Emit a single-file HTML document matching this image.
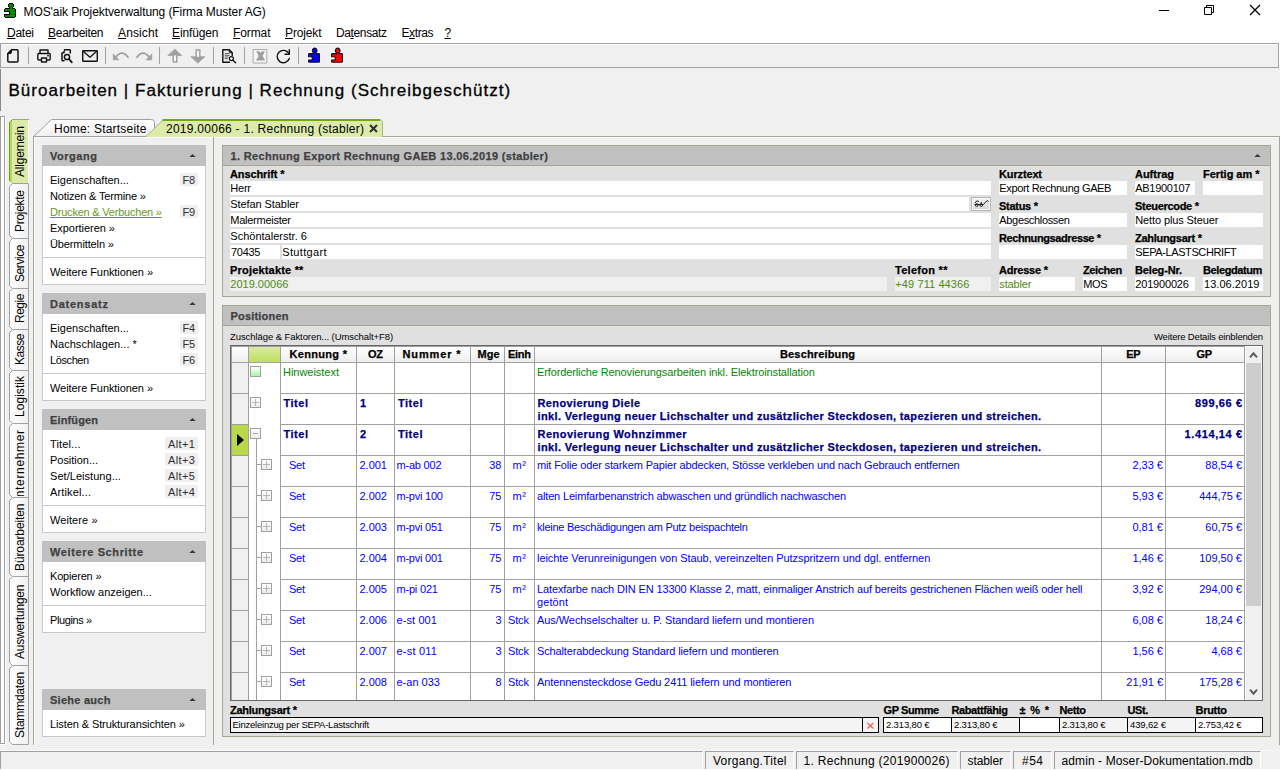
<!DOCTYPE html>
<html lang="de"><head><meta charset="utf-8"><title>MOS'aik Projektverwaltung</title>
<style>
html,body{margin:0;padding:0;}
body{width:1280px;height:770px;position:relative;overflow:hidden;background:#f0f0f0;font-family:"Liberation Sans",sans-serif;font-size:11px;color:#000;}
.a{position:absolute;}
.t{position:absolute;white-space:nowrap;line-height:1;}
.b{font-weight:bold;-webkit-text-stroke:0.25px;}
.box{position:absolute;box-sizing:border-box;}
.fld{position:absolute;background:#fff;height:14px;}
.sk{position:absolute;background:#efefef;height:12px;}
.vt{position:absolute;white-space:nowrap;transform-origin:0 0;transform:rotate(-90deg);font-size:13px;line-height:1;}
.u{text-decoration:underline;}
</style></head>
<body>
<div class="a" style="left:0px;top:0px;width:1280px;height:43px;background:#fff;"></div>
<svg class="a" style="left:0;top:0" width="20" height="20" viewBox="0 0 20 20" shape-rendering="crispEdges"><rect x="9" y="3" width="4" height="1" fill="#000"/><rect x="8" y="4" width="1" height="1" fill="#000"/><rect x="9" y="4" width="4" height="1" fill="#008a00"/><rect x="13" y="4" width="1" height="1" fill="#000"/><rect x="8" y="5" width="1" height="1" fill="#000"/><rect x="9" y="5" width="4" height="1" fill="#008a00"/><rect x="13" y="5" width="1" height="1" fill="#000"/><rect x="8" y="6" width="1" height="1" fill="#000"/><rect x="9" y="6" width="4" height="1" fill="#008a00"/><rect x="13" y="6" width="1" height="1" fill="#000"/><rect x="9" y="7" width="1" height="1" fill="#000"/><rect x="10" y="7" width="2" height="1" fill="#008a00"/><rect x="12" y="7" width="1" height="1" fill="#000"/><rect x="5" y="8" width="5" height="1" fill="#000"/><rect x="10" y="8" width="2" height="1" fill="#008a00"/><rect x="12" y="8" width="3" height="1" fill="#000"/><rect x="4" y="9" width="1" height="1" fill="#000"/><rect x="5" y="9" width="10" height="1" fill="#008a00"/><rect x="15" y="9" width="1" height="1" fill="#000"/><rect x="4" y="10" width="1" height="1" fill="#000"/><rect x="5" y="10" width="10" height="1" fill="#008a00"/><rect x="15" y="10" width="1" height="1" fill="#000"/><rect x="4" y="11" width="6" height="1" fill="#000"/><rect x="10" y="11" width="5" height="1" fill="#008a00"/><rect x="15" y="11" width="1" height="1" fill="#000"/><rect x="9" y="12" width="1" height="1" fill="#000"/><rect x="10" y="12" width="5" height="1" fill="#008a00"/><rect x="15" y="12" width="1" height="1" fill="#000"/><rect x="9" y="13" width="1" height="1" fill="#000"/><rect x="10" y="13" width="5" height="1" fill="#008a00"/><rect x="15" y="13" width="1" height="1" fill="#000"/><rect x="4" y="14" width="6" height="1" fill="#000"/><rect x="10" y="14" width="5" height="1" fill="#008a00"/><rect x="15" y="14" width="1" height="1" fill="#000"/><rect x="4" y="15" width="1" height="1" fill="#000"/><rect x="5" y="15" width="10" height="1" fill="#008a00"/><rect x="15" y="15" width="1" height="1" fill="#000"/><rect x="4" y="16" width="1" height="1" fill="#000"/><rect x="5" y="16" width="10" height="1" fill="#008a00"/><rect x="15" y="16" width="1" height="1" fill="#000"/><rect x="5" y="17" width="10" height="1" fill="#000"/></svg>
<div class="t" style="left:23.5px;top:6px;font-size:12px;letter-spacing:-0.08px;">MOS'aik Projektverwaltung (Firma Muster AG)</div>
<svg class="a" style="left:1150px;top:0" width="130" height="22" viewBox="0 0 130 22" fill="none" stroke="#000" stroke-width="1"><path d="M9 10.5h10"/><path d="M54.5 7.5h7v7h-7zM56.5 7.5v-2h7v7h-2"/><path d="M100 5l10 10M110 5l-10 10" stroke-width="1.25"/></svg>
<div class="t" style="left:7px;top:27px;font-size:12px;letter-spacing:-0.25px;"><span class="u">D</span>atei</div>
<div class="t" style="left:48px;top:27px;font-size:12px;letter-spacing:-0.28px;"><span class="u">B</span>earbeiten</div>
<div class="t" style="left:118px;top:27px;font-size:12px;letter-spacing:0.11px;"><span class="u">A</span>nsicht</div>
<div class="t" style="left:172px;top:27px;font-size:12px;letter-spacing:-0.12px;"><span class="u">E</span>infügen</div>
<div class="t" style="left:233px;top:27px;font-size:12px;letter-spacing:-0.1px;"><span class="u">F</span>ormat</div>
<div class="t" style="left:285px;top:27px;font-size:12px;letter-spacing:-0.14px;"><span class="u">P</span>rojekt</div>
<div class="t" style="left:336px;top:27px;font-size:12px;letter-spacing:-0.38px;">Da<span class="u">t</span>ensatz</div>
<div class="t" style="left:401.5px;top:27px;font-size:12px;letter-spacing:-0.4px;">E<span class="u">x</span>tras</div>
<div class="t" style="left:444.5px;top:27px;font-size:12px;letter-spacing:-0.4px;"><span class="u">?</span></div>
<div class="a" style="left:0px;top:43px;width:1280px;height:1px;background:#a0a0a0;"></div>
<div class="a" style="left:0px;top:67px;width:1280px;height:1px;background:#a0a0a0;"></div>
<div class="a" style="left:0px;top:44px;width:1px;height:23px;background:#a0a0a0;"></div>
<div class="a" style="left:1px;top:44px;width:1277px;height:1px;background:#fff;"></div>
<div class="a" style="left:1278px;top:43px;width:1px;height:25px;background:#a0a0a0;"></div>
<div class="a" style="left:1279px;top:43px;width:1px;height:25px;background:#fff;"></div>
<div class="a" style="left:28px;top:47px;width:1px;height:17px;background:#a0a0a0;"></div>
<div class="a" style="left:105px;top:47px;width:1px;height:17px;background:#a0a0a0;"></div>
<div class="a" style="left:159px;top:47px;width:1px;height:17px;background:#a0a0a0;"></div>
<div class="a" style="left:213px;top:47px;width:1px;height:17px;background:#a0a0a0;"></div>
<div class="a" style="left:244px;top:47px;width:1px;height:17px;background:#a0a0a0;"></div>
<div class="a" style="left:298px;top:47px;width:1px;height:17px;background:#a0a0a0;"></div>
<svg class="a" style="left:0;top:44px" width="360" height="23" viewBox="0 44 360 23" fill="none" stroke-linejoin="round" stroke-linecap="round"><path d="M11.5 49.8H17Q18 49.8 18 50.8V61Q18 62 17 62H8.8Q7.8 62 7.8 61V53.5z" stroke="#111" stroke-width="1.5"/><path d="M7.8 53.5L11.5 49.8V52.5Q11.5 53.5 10.5 53.5z" fill="#111" stroke="#111" stroke-width="1"/><path d="M40 53V50H48V53" stroke="#111" stroke-width="1.4"/><path d="M40.5 60H38.8Q37.8 60 37.8 59V54.5Q37.8 53.5 38.8 53.5H49.2Q50.2 53.5 50.2 54.5V59Q50.2 60 49.2 60H47.5" stroke="#111" stroke-width="1.4"/><path d="M41.5 58H46.5V62H41.5z" stroke="#111" stroke-width="1.4"/><circle cx="48" cy="55.7" r="0.9" fill="#111" stroke="none"/><path d="M64.5 49.8H69.5Q70.3 49.8 70.3 50.6V53M62 53V60Q62 60.8 62.8 60.8H64" stroke="#111" stroke-width="1.5"/><path d="M61.6 53.4L64.8 49.6V52.4Q64.8 53.4 63.8 53.4z" fill="#111" stroke="none"/><circle cx="67" cy="57" r="2.6" stroke="#111" stroke-width="1.5"/><path d="M69 59L71.8 62.3" stroke="#111" stroke-width="1.8"/><rect x="82.7" y="50.7" width="14.6" height="10.6" rx="0.8" stroke="#111" stroke-width="1.4"/><path d="M83 51L90 57.3L97 51" stroke="#111" stroke-width="1.3"/><path d="M115.5 57.5Q122 49 128 57.3" stroke="#a0a0a0" stroke-width="1.8"/><path d="M113.3 54.3V59.8H118.5z" fill="#a0a0a0" stroke="#a0a0a0" stroke-width="0.8"/><path d="M137 57.3Q143 49 149.5 57.5" stroke="#a0a0a0" stroke-width="1.8"/><path d="M151.7 54.3V59.8H146.5z" fill="#a0a0a0" stroke="#a0a0a0" stroke-width="0.8"/><path d="M175 49.3L181.8 55.5H168.2z" fill="#a0a0a0" stroke="#a0a0a0" stroke-width="0.8"/><path d="M173.2 55.5V62H176.8V55.5" stroke="#a0a0a0" stroke-width="1.5" fill="#fafafa" stroke-linejoin="miter"/><path d="M198 63L204.8 56.8H191.2z" fill="#a0a0a0" stroke="#a0a0a0" stroke-width="0.8"/><path d="M196.2 56.8V50H199.8V56.8" stroke="#a0a0a0" stroke-width="1.5" fill="#fafafa" stroke-linejoin="miter"/><path d="M222.8 49.8H229.3L232.2 52.7V55.8M222.8 49.8V62.2H229.5" stroke="#111" stroke-width="1.4"/><path d="M229.3 49.8V52.7H232.2" stroke="#111" stroke-width="1"/><path d="M224.7 53.6H229M224.7 55.3H229.5M224.7 57H228.5M224.7 58.7H227.8" stroke="#333" stroke-width="0.8" stroke-linecap="butt"/><circle cx="231.4" cy="58.6" r="2" stroke="#111" stroke-width="1.2" fill="#f4f4f4"/><path d="M232.9 60.2L235.6 62.8" stroke="#111" stroke-width="1.4"/><rect x="253.5" y="49.5" width="13.3" height="13.5" stroke="#a8a8a8" stroke-width="1" fill="#f6f6f6"/><path d="M256.2 51.2H259.3L260.6 52.8L261.9 51.2H265L262.6 55.9L265.2 60.6H256L258.6 55.9z" fill="#a0a0a0" stroke="none"/><path d="M288.8 53.5A6.2 6.2 0 1 0 289.3 58.5" stroke="#111" stroke-width="1.4"/><path d="M289.3 49.8V54.2H285" stroke="#111" stroke-width="1.4"/><path d="M309.3 53.6H313.6V52.7A2.4 2.4 0 1 1 315.8 52.7V53.6H318.7Q319.5 53.6 319.5 54.4V61.4Q319.5 62.2 318.7 62.2H309.3Q308.5 62.2 308.5 61.4V60H310.2A1.7 1.7 0 1 0 310.2 56.8H308.5V54.4Q308.5 53.6 309.3 53.6Z" fill="none" stroke="#fff" stroke-width="3" stroke-opacity="0.85"/><path d="M309.3 53.6H313.6V52.7A2.4 2.4 0 1 1 315.8 52.7V53.6H318.7Q319.5 53.6 319.5 54.4V61.4Q319.5 62.2 318.7 62.2H309.3Q308.5 62.2 308.5 61.4V60H310.2A1.7 1.7 0 1 0 310.2 56.8H308.5V54.4Q308.5 53.6 309.3 53.6Z" fill="#0000ff" stroke="#101018" stroke-width="1.1"/><path d="M332.3 53.6H336.6V52.7A2.4 2.4 0 1 1 338.8 52.7V53.6H341.7Q342.5 53.6 342.5 54.4V61.4Q342.5 62.2 341.7 62.2H332.3Q331.5 62.2 331.5 61.4V60H333.2A1.7 1.7 0 1 0 333.2 56.8H331.5V54.4Q331.5 53.6 332.3 53.6Z" fill="none" stroke="#fff" stroke-width="3" stroke-opacity="0.85"/><path d="M332.3 53.6H336.6V52.7A2.4 2.4 0 1 1 338.8 52.7V53.6H341.7Q342.5 53.6 342.5 54.4V61.4Q342.5 62.2 341.7 62.2H332.3Q331.5 62.2 331.5 61.4V60H333.2A1.7 1.7 0 1 0 333.2 56.8H331.5V54.4Q331.5 53.6 332.3 53.6Z" fill="#ff0000" stroke="#101018" stroke-width="1.1"/></svg>
<div class="t" style="left:8.5px;top:82px;font-size:17px;letter-spacing:1.02px;-webkit-text-stroke:0.3px #000;">Büroarbeiten | Fakturierung | Rechnung (Schreibgeschützt)</div>
<div class="a" style="left:0px;top:69px;width:1px;height:42px;background:#8a8a8a;"></div>
<div class="a" style="left:0px;top:116px;width:1px;height:628px;background:#a0a0a0;"></div>
<div class="a" style="left:1px;top:116px;width:3px;height:628px;background:#fff;"></div>
<div class="a" style="left:4px;top:116px;width:1px;height:628px;background:#a0a0a0;"></div>
<div class="a" style="left:0px;top:116px;width:5px;height:1px;background:#a0a0a0;"></div>
<div class="a" style="left:0px;top:743px;width:5px;height:1px;background:#a0a0a0;"></div>
<div class="a" style="left:0px;top:744px;width:6px;height:1px;background:#fff;"></div>
<div class="a" style="left:5px;top:116px;width:1px;height:628px;background:#fff;"></div>
<svg class="a" style="left:0;top:110px" width="32" height="640" viewBox="0 110 32 640"><defs><linearGradient id="vg" x1="0" y1="0" x2="1" y2="0"><stop offset="0" stop-color="#ffffff"/><stop offset="1" stop-color="#f0f0f0"/></linearGradient></defs><path d="M28 119.5H12L9 122.5V181L11.5 183.5H28z" fill="#dceba9"/><path d="M10 122L12 120V183H11.5L10 181z" fill="#b4d957"/><path d="M9.5 181V122.5L12.5 119.5" fill="none" stroke="#6aa505" stroke-width="1"/><path d="M12 119.5H29" fill="none" stroke="#a0a0a0" stroke-width="1"/><path d="M28.5 120V183" fill="none" stroke="#fff" stroke-width="1"/><path d="M28.5 183.5H12.5L9.5 186.5V235.5L12.5 238.5H28.5z" fill="url(#vg)" stroke="#a0a0a0" stroke-width="1"/><path d="M28.5 238.5H12.5L9.5 241.5V285.5L12.5 288.5H28.5z" fill="url(#vg)" stroke="#a0a0a0" stroke-width="1"/><path d="M28.5 288.5H12.5L9.5 291.5V326.5L12.5 329.5H28.5z" fill="url(#vg)" stroke="#a0a0a0" stroke-width="1"/><path d="M28.5 329.5H12.5L9.5 332.5V367.5L12.5 370.5H28.5z" fill="url(#vg)" stroke="#a0a0a0" stroke-width="1"/><path d="M28.5 370.5H12.5L9.5 373.5V420.5L12.5 423.5H28.5z" fill="url(#vg)" stroke="#a0a0a0" stroke-width="1"/><path d="M28.5 423.5H12.5L9.5 426.5V494.5L12.5 497.5H28.5z" fill="url(#vg)" stroke="#a0a0a0" stroke-width="1"/><path d="M28.5 497.5H12.5L9.5 500.5V573.5L12.5 576.5H28.5z" fill="url(#vg)" stroke="#a0a0a0" stroke-width="1"/><path d="M28.5 576.5H12.5L9.5 579.5V662.5L12.5 665.5H28.5z" fill="url(#vg)" stroke="#a0a0a0" stroke-width="1"/><path d="M28.5 665.5H12.5L9.5 668.5V741.5L12.5 744.5H28.5z" fill="url(#vg)" stroke="#a0a0a0" stroke-width="1"/></svg>
<div class="vt" style="left:14px;top:176.5px;font-size:12px;letter-spacing:-0.21px;">Allgemein</div>
<div class="vt" style="left:14px;top:232px;font-size:12px;letter-spacing:-0.29px;">Projekte</div>
<div class="vt" style="left:14px;top:281.5px;font-size:12px;letter-spacing:-0.42px;">Service</div>
<div class="vt" style="left:14px;top:323.43px;font-size:12px;letter-spacing:-0.5px;">Regie</div>
<div class="vt" style="left:14px;top:365.42px;font-size:12px;letter-spacing:-0.5px;">Kasse</div>
<div class="vt" style="left:14px;top:417px;font-size:12px;letter-spacing:0.04px;">Logistik</div>
<div class="a" style="left:10px;top:424px;width:18px;height:72px;overflow:hidden;"><div class="vt" style="left:4px;top:104.04px;font-size:12px;letter-spacing:0.67px;">Subunternehmer</div></div>
<div class="vt" style="left:14px;top:571px;font-size:12px;letter-spacing:-0.11px;">Büroarbeiten</div>
<div class="vt" style="left:14px;top:658.5px;font-size:12px;letter-spacing:-0.2px;">Auswertungen</div>
<div class="vt" style="left:14px;top:738px;font-size:12px;letter-spacing:-0.22px;">Stammdaten</div>
<div class="box" style="left:33px;top:136px;width:1247px;height:609px;border:1px solid #aaa592;border-bottom:none;"></div>
<div class="a" style="left:34px;top:137px;width:1245px;height:1px;background:#fff;"></div>
<div class="a" style="left:34px;top:137px;width:1px;height:608px;background:#fff;"></div>
<div class="a" style="left:213px;top:137px;width:1px;height:608px;background:#aaa592;"></div>
<svg class="a" style="left:30px;top:116px" width="360" height="22" viewBox="30 116 360 22">
<defs><linearGradient id="tg" x1="0" y1="0" x2="0" y2="1"><stop offset="0" stop-color="#ffffff"/><stop offset="1" stop-color="#f0f0f0"/></linearGradient></defs>
<path d="M33.5 136.5L51.5 119.5H151.5Q154.5 119.5 154.5 122.5V136.5z" fill="url(#tg)" stroke="#a0a0a0" stroke-width="1"/>
<path d="M145.5 137L163 120H379Q382 120 382 123V137z" fill="#dceba9"/>
<path d="M146 136.5L163.5 119.5H379.5Q382.5 119.5 382.5 122.5V137" fill="none" stroke="#a8b878" stroke-width="1"/>
<path d="M162.5 120H380" fill="none" stroke="#76a80a" stroke-width="2"/>
</svg>
<div class="t" style="left:54px;top:123px;font-size:12px;letter-spacing:0.21px;">Home: Startseite</div>
<div class="t" style="left:166px;top:123px;font-size:12px;letter-spacing:0.26px;">2019.00066 - 1. Rechnung (stabler)</div>
<svg class="a" style="left:369px;top:124px" width="9" height="9" viewBox="0 0 9 9"><path d="M1 1L8 8M8 1L1 8" stroke="#303030" stroke-width="2"/></svg>
<div class="a" style="left:0px;top:750px;width:1280px;height:1px;background:#f8f8f8;"></div>
<div class="a" style="left:0px;top:769px;width:1280px;height:1px;background:#fff;"></div>
<div class="box" style="left:0px;top:751px;width:703px;height:18px;border-left:1px solid #a0a0a0;border-top:1px solid #a0a0a0;border-right:1px solid #fff;"></div>
<div class="box" style="left:705px;top:751px;width:89px;height:18px;border-left:1px solid #a0a0a0;border-top:1px solid #a0a0a0;border-right:1px solid #fff;"></div>
<div class="t" style="left:713px;top:755px;font-size:12px;letter-spacing:0.27px;">Vorgang.Titel</div>
<div class="box" style="left:796px;top:751px;width:162px;height:18px;border-left:1px solid #a0a0a0;border-top:1px solid #a0a0a0;border-right:1px solid #fff;"></div>
<div class="t" style="left:803.5px;top:755px;font-size:12px;letter-spacing:0.3px;">1. Rechnung (201900026)</div>
<div class="box" style="left:960px;top:751px;width:51px;height:18px;border-left:1px solid #a0a0a0;border-top:1px solid #a0a0a0;border-right:1px solid #fff;"></div>
<div class="t" style="left:967.5px;top:755px;font-size:12px;letter-spacing:-0.09px;">stabler</div>
<div class="box" style="left:1013px;top:751px;width:39px;height:18px;border-left:1px solid #a0a0a0;border-top:1px solid #a0a0a0;border-right:1px solid #fff;"></div>
<div class="t" style="left:1022px;top:755px;font-size:12px;letter-spacing:0.49px;">#54</div>
<div class="box" style="left:1054px;top:751px;width:207px;height:18px;border-left:1px solid #a0a0a0;border-top:1px solid #a0a0a0;border-right:1px solid #fff;"></div>
<div class="t" style="left:1061.5px;top:755px;font-size:12px;letter-spacing:0.1px;">admin - Moser-Dokumentation.mdb</div>
<div class="box" style="left:42px;top:165px;width:164px;height:120px;background:#fff;border:1px solid #c8c8c8;border-top:none;"></div>
<div class="a" style="left:42px;top:145px;width:164px;height:21px;background:#c0c0c0;"></div>
<div class="t b" style="left:50px;top:151px;font-size:11px;letter-spacing:0.53px;color:#404040;">Vorgang</div>
<svg class="a" style="left:189px;top:154px" width="7" height="3" viewBox="0 0 7 3"><path d="M0.3 3L3.5 0L6.7 3z" fill="#383838"/></svg>
<div class="t" style="left:50px;top:175px;font-size:11px;">Eigenschaften...</div>
<div class="sk" style="left:180px;top:173px;width:18px;height:13px;"></div>
<div class="t" style="left:182.5px;top:175px;font-size:11px;letter-spacing:-0.34px;color:#303030;">F8</div>
<div class="t" style="left:50px;top:191px;font-size:11px;letter-spacing:-0.16px;">Notizen &amp; Termine »</div>
<div class="t u" style="left:50px;top:207px;font-size:11px;letter-spacing:-0.21px;color:#6a9a1a;">Drucken &amp; Verbuchen »</div>
<div class="sk" style="left:180px;top:205px;width:18px;height:13px;"></div>
<div class="t" style="left:182.5px;top:207px;font-size:11px;letter-spacing:-0.34px;color:#303030;">F9</div>
<div class="t" style="left:50px;top:223px;font-size:11px;letter-spacing:-0.04px;">Exportieren »</div>
<div class="t" style="left:50px;top:239px;font-size:11px;letter-spacing:-0.12px;">Übermitteln »</div>
<div class="a" style="left:43px;top:257px;width:162px;height:1px;background:#c8c8c8;"></div>
<div class="t" style="left:50px;top:267px;font-size:11px;letter-spacing:-0.07px;">Weitere Funktionen »</div>
<div class="box" style="left:42px;top:313px;width:164px;height:88px;background:#fff;border:1px solid #c8c8c8;border-top:none;"></div>
<div class="a" style="left:42px;top:293px;width:164px;height:21px;background:#c0c0c0;"></div>
<div class="t b" style="left:50px;top:299px;font-size:11px;letter-spacing:0.75px;color:#404040;">Datensatz</div>
<svg class="a" style="left:189px;top:302px" width="7" height="3" viewBox="0 0 7 3"><path d="M0.3 3L3.5 0L6.7 3z" fill="#383838"/></svg>
<div class="t" style="left:50px;top:323px;font-size:11px;">Eigenschaften...</div>
<div class="sk" style="left:180px;top:321px;width:18px;height:13px;"></div>
<div class="t" style="left:182.5px;top:323px;font-size:11px;letter-spacing:-0.34px;color:#303030;">F4</div>
<div class="t" style="left:50px;top:339px;font-size:11px;letter-spacing:0.04px;">Nachschlagen... *</div>
<div class="sk" style="left:180px;top:337px;width:18px;height:13px;"></div>
<div class="t" style="left:182.5px;top:339px;font-size:11px;letter-spacing:-0.34px;color:#303030;">F5</div>
<div class="t" style="left:50px;top:355px;font-size:11px;letter-spacing:-0.4px;">Löschen</div>
<div class="sk" style="left:180px;top:353px;width:18px;height:13px;"></div>
<div class="t" style="left:182.5px;top:355px;font-size:11px;letter-spacing:-0.34px;color:#303030;">F6</div>
<div class="a" style="left:43px;top:373px;width:162px;height:1px;background:#c8c8c8;"></div>
<div class="t" style="left:50px;top:383px;font-size:11px;letter-spacing:-0.07px;">Weitere Funktionen »</div>
<div class="box" style="left:42px;top:429px;width:164px;height:104px;background:#fff;border:1px solid #c8c8c8;border-top:none;"></div>
<div class="a" style="left:42px;top:409px;width:164px;height:21px;background:#c0c0c0;"></div>
<div class="t b" style="left:50px;top:415px;font-size:11px;letter-spacing:0.13px;color:#404040;">Einfügen</div>
<svg class="a" style="left:189px;top:418px" width="7" height="3" viewBox="0 0 7 3"><path d="M0.3 3L3.5 0L6.7 3z" fill="#383838"/></svg>
<div class="t" style="left:50px;top:439px;font-size:11px;letter-spacing:0.13px;">Titel...</div>
<div class="sk" style="left:165px;top:437px;width:33px;height:13px;"></div>
<div class="t" style="left:168px;top:439px;font-size:11px;letter-spacing:0.4px;color:#303030;">Alt+1</div>
<div class="t" style="left:50px;top:455px;font-size:11px;letter-spacing:-0.03px;">Position...</div>
<div class="sk" style="left:165px;top:453px;width:33px;height:13px;"></div>
<div class="t" style="left:168px;top:455px;font-size:11px;letter-spacing:0.4px;color:#303030;">Alt+3</div>
<div class="t" style="left:50px;top:471px;font-size:11px;letter-spacing:0.04px;">Set/Leistung...</div>
<div class="sk" style="left:165px;top:469px;width:33px;height:13px;"></div>
<div class="t" style="left:168px;top:471px;font-size:11px;letter-spacing:0.4px;color:#303030;">Alt+5</div>
<div class="t" style="left:50px;top:487px;font-size:11px;letter-spacing:0.14px;">Artikel...</div>
<div class="sk" style="left:165px;top:485px;width:33px;height:13px;"></div>
<div class="t" style="left:168px;top:487px;font-size:11px;letter-spacing:0.4px;color:#303030;">Alt+4</div>
<div class="a" style="left:43px;top:505px;width:162px;height:1px;background:#c8c8c8;"></div>
<div class="t" style="left:50px;top:515px;font-size:11px;letter-spacing:0.08px;">Weitere »</div>
<div class="box" style="left:42px;top:561px;width:164px;height:72px;background:#fff;border:1px solid #c8c8c8;border-top:none;"></div>
<div class="a" style="left:42px;top:541px;width:164px;height:21px;background:#c0c0c0;"></div>
<div class="t b" style="left:50px;top:547px;font-size:11px;letter-spacing:0.63px;color:#404040;">Weitere Schritte</div>
<svg class="a" style="left:189px;top:550px" width="7" height="3" viewBox="0 0 7 3"><path d="M0.3 3L3.5 0L6.7 3z" fill="#383838"/></svg>
<div class="t" style="left:50px;top:571px;font-size:11px;letter-spacing:-0.19px;">Kopieren »</div>
<div class="t" style="left:50px;top:587px;font-size:11px;">Workflow anzeigen...</div>
<div class="a" style="left:43px;top:605px;width:162px;height:1px;background:#c8c8c8;"></div>
<div class="t" style="left:50px;top:615px;font-size:11px;letter-spacing:-0.4px;">Plugins »</div>
<div class="box" style="left:42px;top:709px;width:164px;height:28px;background:#fff;border:1px solid #c8c8c8;border-top:none;"></div>
<div class="a" style="left:42px;top:689px;width:164px;height:21px;background:#c0c0c0;"></div>
<div class="t b" style="left:50px;top:695px;font-size:11px;letter-spacing:0.26px;color:#404040;">Siehe auch</div>
<svg class="a" style="left:189px;top:698px" width="7" height="3" viewBox="0 0 7 3"><path d="M0.3 3L3.5 0L6.7 3z" fill="#383838"/></svg>
<div class="t" style="left:50px;top:719px;font-size:11px;letter-spacing:-0.1px;">Listen &amp; Strukturansichten »</div>
<div class="box" style="left:222px;top:145px;width:1049px;height:152px;border:1px solid #aaa592;background:#e0e0e0;"></div>
<div class="a" style="left:223px;top:146px;width:1047px;height:19px;background:#c0c0c0;"></div>
<div class="a" style="left:223px;top:165px;width:1047px;height:1px;background:#aaa592;"></div>
<div class="t b" style="left:230.5px;top:151px;font-size:11px;letter-spacing:0.33px;color:#404040;">1. Rechnung Export Rechnung GAEB 13.06.2019 (stabler)</div>
<svg class="a" style="left:1254px;top:154px" width="7" height="3" viewBox="0 0 7 3"><path d="M0.3 3L3.5 0L6.7 3z" fill="#383838"/></svg>
<div class="t b" style="left:230px;top:169px;font-size:11px;letter-spacing:-0.11px;">Anschrift *</div>
<div class="fld" style="left:230px;top:181px;width:761px;background:#fff;"></div>
<div class="t" style="left:230.3px;top:183px;font-size:11px;letter-spacing:-0.23px;">Herr</div>
<div class="fld" style="left:230px;top:197px;width:739px;background:#fff;"></div>
<div class="t" style="left:230.3px;top:199px;font-size:11px;letter-spacing:-0.08px;">Stefan Stabler</div>
<div class="fld" style="left:230px;top:213px;width:761px;background:#fff;"></div>
<div class="t" style="left:230.3px;top:215px;font-size:11px;letter-spacing:-0.26px;">Malermeister</div>
<div class="fld" style="left:230px;top:229px;width:761px;background:#fff;"></div>
<div class="t" style="left:230.3px;top:231px;font-size:11px;letter-spacing:0.01px;">Schöntalerstr. 6</div>
<div class="fld" style="left:230px;top:245px;width:50px;background:#fff;"></div>
<div class="t" style="left:231px;top:247px;font-size:11px;letter-spacing:-0.28px;">70435</div>
<div class="fld" style="left:282px;top:245px;width:709px;background:#fff;"></div>
<div class="t" style="left:282.3px;top:247px;font-size:11px;letter-spacing:0.32px;">Stuttgart</div>
<div class="box" style="left:971px;top:197px;width:20px;height:14px;background:linear-gradient(#f4f4f4,#d6d6d6);border:1px solid #b4b4b4;box-shadow:inset 0 0 0 1px #fafafa;"></div>
<svg class="a" style="left:972px;top:198px" width="18" height="12" viewBox="972 198 18 12" fill="none" stroke="#222" stroke-width="1"><path d="M974.5 204.5h9M975 203Q976.5 199.5 979 201.5M980.5 203.5Q981 202 982 202.5M983.5 204.5L987 200.5L988.5 201.5"/><circle cx="976.7" cy="205" r="1.4"/><circle cx="981.3" cy="205" r="1.4"/></svg>
<div class="t b" style="left:230px;top:265px;font-size:11px;letter-spacing:0.19px;">Projektakte **</div>
<div class="fld" style="left:230px;top:277px;width:657px;background:#f0f0f0;"></div>
<div class="t" style="left:230.3px;top:279px;font-size:11px;color:#4f8a10;">2019.00066</div>
<div class="t b" style="left:895px;top:265px;font-size:11px;letter-spacing:0.28px;">Telefon **</div>
<div class="fld" style="left:895px;top:277px;width:96px;background:#f0f0f0;"></div>
<div class="t" style="left:895.3px;top:279px;font-size:11px;letter-spacing:0.1px;color:#4f8a10;">+49 711 44366</div>
<div class="t b" style="left:999px;top:169px;font-size:11px;letter-spacing:-0.14px;">Kurztext</div>
<div class="fld" style="left:999px;top:181px;width:128px;background:#fff;"></div>
<div class="t" style="left:999.3px;top:183px;font-size:11px;letter-spacing:-0.34px;">Export Rechnung GAEB</div>
<div class="t b" style="left:1135px;top:169px;font-size:11px;letter-spacing:-0.02px;">Auftrag</div>
<div class="fld" style="left:1135px;top:181px;width:60px;background:#fff;"></div>
<div class="t" style="left:1135.3px;top:183px;font-size:11px;letter-spacing:-0.3px;">AB1900107</div>
<div class="t b" style="left:1203px;top:169px;font-size:11px;letter-spacing:-0.04px;">Fertig am *</div>
<div class="fld" style="left:1203px;top:181px;width:60px;background:#fff;"></div>
<div class="t b" style="left:999px;top:201px;font-size:11px;letter-spacing:-0.28px;">Status *</div>
<div class="fld" style="left:999px;top:213px;width:128px;background:#fff;"></div>
<div class="t" style="left:999.3px;top:215px;font-size:11px;letter-spacing:-0.33px;">Abgeschlossen</div>
<div class="t b" style="left:1135px;top:201px;font-size:11px;letter-spacing:-0.3px;">Steuercode *</div>
<div class="fld" style="left:1135px;top:213px;width:128px;background:#fff;"></div>
<div class="t" style="left:1135.3px;top:215px;font-size:11px;letter-spacing:-0.12px;">Netto plus Steuer</div>
<div class="t b" style="left:999px;top:233px;font-size:11px;letter-spacing:-0.4px;">Rechnungsadresse *</div>
<div class="fld" style="left:999px;top:245px;width:128px;background:#fff;"></div>
<div class="t b" style="left:1135px;top:233px;font-size:11px;letter-spacing:-0.28px;">Zahlungsart *</div>
<div class="fld" style="left:1135px;top:245px;width:128px;background:#fff;"></div>
<div class="t" style="left:1135.3px;top:247px;font-size:11px;letter-spacing:-0.4px;">SEPA-LASTSCHRIFT</div>
<div class="t b" style="left:999px;top:265px;font-size:11px;letter-spacing:-0.22px;">Adresse *</div>
<div class="fld" style="left:999px;top:277px;width:76px;background:#fff;"></div>
<div class="t" style="left:999.3px;top:279px;font-size:11px;letter-spacing:-0.14px;color:#4f8a10;">stabler</div>
<div class="t b" style="left:1083px;top:265px;font-size:11px;letter-spacing:-0.4px;">Zeichen</div>
<div class="fld" style="left:1083px;top:277px;width:44px;background:#fff;"></div>
<div class="t" style="left:1083.3px;top:279px;font-size:11px;letter-spacing:-0.4px;">MOS</div>
<div class="t b" style="left:1135px;top:265px;font-size:11px;letter-spacing:-0.16px;">Beleg-Nr.</div>
<div class="fld" style="left:1135px;top:277px;width:60px;background:#fff;"></div>
<div class="t" style="left:1135.3px;top:279px;font-size:11px;letter-spacing:-0.18px;">201900026</div>
<div class="t b" style="left:1203px;top:265px;font-size:11px;letter-spacing:-0.4px;">Belegdatum</div>
<div class="fld" style="left:1203px;top:277px;width:60px;background:#fff;"></div>
<div class="t" style="left:1204px;top:279px;font-size:11px;letter-spacing:0.04px;">13.06.2019</div>
<div class="box" style="left:222px;top:305px;width:1049px;height:432px;border:1px solid #aaa592;background:#e0e0e0;"></div>
<div class="a" style="left:223px;top:306px;width:1047px;height:19px;background:#c0c0c0;"></div>
<div class="a" style="left:223px;top:325px;width:1047px;height:1px;background:#aaa592;"></div>
<div class="t b" style="left:230.5px;top:311px;font-size:11px;letter-spacing:0.19px;color:#404040;">Positionen</div>
<div class="t" style="left:230px;top:332px;font-size:9.5px;letter-spacing:-0.08px;">Zuschläge &amp; Faktoren... (Umschalt+F8)</div>
<div class="t" style="left:1154px;top:332px;font-size:9.5px;letter-spacing:-0.17px;">Weitere Details einblenden</div>
<div class="a" style="left:230px;top:345px;width:1033px;height:356px;background:#fff;"></div>
<div class="a" style="left:232px;top:347px;width:16px;height:353px;background:#f0f0f0;"></div>
<div class="a" style="left:232px;top:347px;width:1012px;height:15px;background:linear-gradient(#ffffff,#eeeeee);"></div>
<div class="a" style="left:249px;top:347px;width:31px;height:15px;background:linear-gradient(#dceba4,#bfe05c);"></div>
<div class="a" style="left:232px;top:362px;width:16px;height:1px;background:#a0a0a0;"></div>
<div class="a" style="left:280px;top:362px;width:965px;height:1px;background:#a0a0a0;"></div>
<div class="a" style="left:232px;top:393px;width:16px;height:1px;background:#a0a0a0;"></div>
<div class="a" style="left:280px;top:393px;width:965px;height:1px;background:#a0a0a0;"></div>
<div class="a" style="left:232px;top:424px;width:16px;height:1px;background:#a0a0a0;"></div>
<div class="a" style="left:280px;top:424px;width:965px;height:1px;background:#a0a0a0;"></div>
<div class="a" style="left:232px;top:455px;width:16px;height:1px;background:#a0a0a0;"></div>
<div class="a" style="left:280px;top:455px;width:965px;height:1px;background:#a0a0a0;"></div>
<div class="a" style="left:232px;top:486px;width:16px;height:1px;background:#a0a0a0;"></div>
<div class="a" style="left:280px;top:486px;width:965px;height:1px;background:#a0a0a0;"></div>
<div class="a" style="left:232px;top:517px;width:16px;height:1px;background:#a0a0a0;"></div>
<div class="a" style="left:280px;top:517px;width:965px;height:1px;background:#a0a0a0;"></div>
<div class="a" style="left:232px;top:548px;width:16px;height:1px;background:#a0a0a0;"></div>
<div class="a" style="left:280px;top:548px;width:965px;height:1px;background:#a0a0a0;"></div>
<div class="a" style="left:232px;top:579px;width:16px;height:1px;background:#a0a0a0;"></div>
<div class="a" style="left:280px;top:579px;width:965px;height:1px;background:#a0a0a0;"></div>
<div class="a" style="left:232px;top:610px;width:16px;height:1px;background:#a0a0a0;"></div>
<div class="a" style="left:280px;top:610px;width:965px;height:1px;background:#a0a0a0;"></div>
<div class="a" style="left:232px;top:641px;width:16px;height:1px;background:#a0a0a0;"></div>
<div class="a" style="left:280px;top:641px;width:965px;height:1px;background:#a0a0a0;"></div>
<div class="a" style="left:232px;top:672px;width:16px;height:1px;background:#a0a0a0;"></div>
<div class="a" style="left:280px;top:672px;width:965px;height:1px;background:#a0a0a0;"></div>
<div class="a" style="left:249px;top:362px;width:31px;height:1px;background:#a0a0a0;"></div>
<div class="a" style="left:248px;top:347px;width:1px;height:353px;background:#a0a0a0;"></div>
<div class="a" style="left:280px;top:347px;width:1px;height:353px;background:#a0a0a0;"></div>
<div class="a" style="left:356px;top:347px;width:1px;height:353px;background:#a0a0a0;"></div>
<div class="a" style="left:394px;top:347px;width:1px;height:353px;background:#a0a0a0;"></div>
<div class="a" style="left:470px;top:347px;width:1px;height:353px;background:#a0a0a0;"></div>
<div class="a" style="left:504px;top:347px;width:1px;height:353px;background:#a0a0a0;"></div>
<div class="a" style="left:534px;top:347px;width:1px;height:353px;background:#a0a0a0;"></div>
<div class="a" style="left:1101px;top:347px;width:1px;height:353px;background:#a0a0a0;"></div>
<div class="a" style="left:1165px;top:347px;width:1px;height:353px;background:#a0a0a0;"></div>
<div class="a" style="left:1244px;top:347px;width:1px;height:353px;background:#a0a0a0;"></div>
<div class="a" style="left:231px;top:425px;width:17px;height:30px;background:#b9d94c;"></div>
<svg class="a" style="left:237px;top:434px" width="7" height="12" viewBox="0 0 7 12"><path d="M0 0L7 6L0 12z" fill="#000"/></svg>
<div class="a" style="left:231px;top:346px;width:1031px;height:1px;background:#a0a0a0;"></div>
<div class="a" style="left:231px;top:346px;width:1px;height:354px;background:#a0a0a0;"></div>
<div class="a" style="left:1245px;top:346px;width:17px;height:354px;background:#f0f0f0;"></div>
<div class="a" style="left:1245px;top:346px;width:17px;height:1px;background:#fff;"></div>
<div class="a" style="left:1245px;top:346px;width:1px;height:354px;background:#fff;"></div>
<div class="a" style="left:1246px;top:363px;width:15px;height:243px;background:#cdcdcd;"></div>
<svg class="a" style="left:1249px;top:351px" width="9" height="8" viewBox="0 0 9 8"><path d="M1 6.3L4.5 2.3L8 6.3" fill="none" stroke="#5a5a5a" stroke-width="2"/></svg>
<svg class="a" style="left:1249px;top:688px" width="9" height="8" viewBox="0 0 9 8"><path d="M1 1.7L4.5 5.7L8 1.7" fill="none" stroke="#5a5a5a" stroke-width="2"/></svg>
<div class="a" style="left:230px;top:345px;width:1033px;height:1px;background:#696969;"></div>
<div class="a" style="left:230px;top:345px;width:1px;height:356px;background:#696969;"></div>
<div class="a" style="left:230px;top:700px;width:1033px;height:1px;background:#696969;"></div>
<div class="a" style="left:1262px;top:345px;width:1px;height:356px;background:#696969;"></div>
<div class="t b" style="left:289.5px;top:349px;font-size:11px;letter-spacing:0.31px;">Kennung *</div>
<div class="t b" style="left:368.06px;top:349px;font-size:11px;letter-spacing:-0.4px;">OZ</div>
<div class="t b" style="left:402.5px;top:349px;font-size:11px;letter-spacing:0.86px;">Nummer *</div>
<div class="t b" style="left:477.5px;top:349px;font-size:11px;">Mge</div>
<div class="t b" style="left:508px;top:349px;font-size:11px;letter-spacing:-0.28px;">Einh</div>
<div class="t b" style="left:780px;top:349px;font-size:11px;letter-spacing:0.15px;">Beschreibung</div>
<div class="t b" style="left:1126.36px;top:349px;font-size:11px;letter-spacing:-0.4px;">EP</div>
<div class="t b" style="left:1196.5px;top:349px;font-size:11px;letter-spacing:-0.4px;">GP</div>
<div class="box" style="left:250px;top:366px;width:11px;height:11px;border:1px solid #a0a0a0;background:linear-gradient(#ffffff,#a6f3a6);"></div>
<div class="t" style="left:283px;top:367px;font-size:11px;letter-spacing:-0.03px;color:#008a00;">Hinweistext</div>
<div class="t" style="left:537px;top:367px;font-size:11px;letter-spacing:-0.12px;color:#008a00;">Erforderliche Renovierungsarbeiten inkl. Elektroinstallation</div>
<div class="box" style="left:250px;top:397px;width:11px;height:11px;border:1px solid #a0a0a0;background:linear-gradient(#fff,#ececec);"></div>
<div class="a" style="left:252px;top:402px;width:7px;height:1px;background:#b2b2c0;"></div>
<div class="a" style="left:255px;top:399px;width:1px;height:7px;background:#b2b2c0;"></div>
<div class="t b" style="left:283.5px;top:398px;font-size:11px;letter-spacing:0.52px;color:#000080;">Titel</div>
<div class="t b" style="left:360px;top:398px;font-size:11px;color:#000080;">1</div>
<div class="t b" style="left:398px;top:398px;font-size:11px;letter-spacing:0.52px;color:#000080;">Titel</div>
<div class="t b" style="left:537.5px;top:398px;font-size:11px;letter-spacing:0.37px;color:#000080;">Renovierung Diele</div>
<div class="t b" style="left:537.5px;top:411px;font-size:11px;letter-spacing:0.36px;color:#000080;">inkl. Verlegung neuer Lichschalter und zusätzlicher Steckdosen, tapezieren und streichen.</div>
<div class="t b" style="right:37.41px;top:398px;font-size:11px;letter-spacing:0.59px;color:#000080;">899,66 €</div>
<div class="box" style="left:250px;top:428px;width:11px;height:11px;border:1px solid #a0a0a0;background:linear-gradient(#fff,#ececec);"></div>
<div class="a" style="left:253px;top:433px;width:5px;height:1px;background:#a9a196;"></div>
<div class="t b" style="left:283.5px;top:429px;font-size:11px;letter-spacing:0.52px;color:#000080;">Titel</div>
<div class="t b" style="left:360px;top:429px;font-size:11px;color:#000080;">2</div>
<div class="t b" style="left:398px;top:429px;font-size:11px;letter-spacing:0.52px;color:#000080;">Titel</div>
<div class="t b" style="left:537.5px;top:429px;font-size:11px;letter-spacing:0.47px;color:#000080;">Renovierung Wohnzimmer</div>
<div class="t b" style="left:537.5px;top:442px;font-size:11px;letter-spacing:0.36px;color:#000080;">inkl. Verlegung neuer Lichschalter und zusätzlicher Steckdosen, tapezieren und streichen.</div>
<div class="t b" style="right:37.40px;top:429px;font-size:11px;letter-spacing:0.6px;color:#000080;">1.414,14 €</div>
<div class="a" style="left:256px;top:439px;width:1px;height:261px;background:#a0a0a0;"></div>
<div class="a" style="left:256px;top:464px;width:5px;height:1px;background:#a0a0a0;"></div>
<div class="box" style="left:261px;top:459px;width:11px;height:11px;border:1px solid #a0a0a0;background:linear-gradient(#fff,#ececec);"></div>
<div class="a" style="left:263px;top:464px;width:7px;height:1px;background:#b2b2c0;"></div>
<div class="a" style="left:266px;top:461px;width:1px;height:7px;background:#b2b2c0;"></div>
<div class="t" style="left:289px;top:460px;font-size:11px;letter-spacing:-0.27px;color:#0000ff;">Set</div>
<div class="t" style="left:359.5px;top:460px;font-size:11px;letter-spacing:-0.02px;color:#0000ff;">2.001</div>
<div class="t" style="left:396.5px;top:460px;font-size:11px;letter-spacing:-0.21px;color:#0000ff;">m-ab 002</div>
<div class="t" style="right:778.50px;top:460px;font-size:11px;color:#0000ff;">38</div>
<div class="t" style="left:512.5px;top:460px;font-size:11px;letter-spacing:0.69px;color:#0000ff;">m²</div>
<div class="t" style="left:537px;top:460px;font-size:11px;letter-spacing:-0.14px;color:#0000ff;">mit Folie oder starkem Papier abdecken, Stösse verkleben und nach Gebrauch entfernen</div>
<div class="t" style="right:117.00px;top:460px;font-size:11px;color:#0000ff;">2,33 €</div>
<div class="t" style="right:38.00px;top:460px;font-size:11px;color:#0000ff;">88,54 €</div>
<div class="a" style="left:256px;top:495px;width:5px;height:1px;background:#a0a0a0;"></div>
<div class="box" style="left:261px;top:490px;width:11px;height:11px;border:1px solid #a0a0a0;background:linear-gradient(#fff,#ececec);"></div>
<div class="a" style="left:263px;top:495px;width:7px;height:1px;background:#b2b2c0;"></div>
<div class="a" style="left:266px;top:492px;width:1px;height:7px;background:#b2b2c0;"></div>
<div class="t" style="left:289px;top:491px;font-size:11px;letter-spacing:-0.27px;color:#0000ff;">Set</div>
<div class="t" style="left:359.5px;top:491px;font-size:11px;letter-spacing:-0.02px;color:#0000ff;">2.002</div>
<div class="t" style="left:396.5px;top:491px;font-size:11px;letter-spacing:-0.23px;color:#0000ff;">m-pvi 100</div>
<div class="t" style="right:778.50px;top:491px;font-size:11px;color:#0000ff;">75</div>
<div class="t" style="left:512.5px;top:491px;font-size:11px;letter-spacing:0.69px;color:#0000ff;">m²</div>
<div class="t" style="left:537px;top:491px;font-size:11px;letter-spacing:-0.16px;color:#0000ff;">alten Leimfarbenanstrich abwaschen und gründlich nachwaschen</div>
<div class="t" style="right:117.00px;top:491px;font-size:11px;color:#0000ff;">5,93 €</div>
<div class="t" style="right:38.00px;top:491px;font-size:11px;color:#0000ff;">444,75 €</div>
<div class="a" style="left:256px;top:526px;width:5px;height:1px;background:#a0a0a0;"></div>
<div class="box" style="left:261px;top:521px;width:11px;height:11px;border:1px solid #a0a0a0;background:linear-gradient(#fff,#ececec);"></div>
<div class="a" style="left:263px;top:526px;width:7px;height:1px;background:#b2b2c0;"></div>
<div class="a" style="left:266px;top:523px;width:1px;height:7px;background:#b2b2c0;"></div>
<div class="t" style="left:289px;top:522px;font-size:11px;letter-spacing:-0.27px;color:#0000ff;">Set</div>
<div class="t" style="left:359.5px;top:522px;font-size:11px;letter-spacing:-0.02px;color:#0000ff;">2.003</div>
<div class="t" style="left:396.5px;top:522px;font-size:11px;letter-spacing:-0.23px;color:#0000ff;">m-pvi 051</div>
<div class="t" style="right:778.50px;top:522px;font-size:11px;color:#0000ff;">75</div>
<div class="t" style="left:512.5px;top:522px;font-size:11px;letter-spacing:0.69px;color:#0000ff;">m²</div>
<div class="t" style="left:537px;top:522px;font-size:11px;letter-spacing:-0.27px;color:#0000ff;">kleine Beschädigungen am Putz beispachteln</div>
<div class="t" style="right:117.00px;top:522px;font-size:11px;color:#0000ff;">0,81 €</div>
<div class="t" style="right:38.00px;top:522px;font-size:11px;color:#0000ff;">60,75 €</div>
<div class="a" style="left:256px;top:557px;width:5px;height:1px;background:#a0a0a0;"></div>
<div class="box" style="left:261px;top:552px;width:11px;height:11px;border:1px solid #a0a0a0;background:linear-gradient(#fff,#ececec);"></div>
<div class="a" style="left:263px;top:557px;width:7px;height:1px;background:#b2b2c0;"></div>
<div class="a" style="left:266px;top:554px;width:1px;height:7px;background:#b2b2c0;"></div>
<div class="t" style="left:289px;top:553px;font-size:11px;letter-spacing:-0.27px;color:#0000ff;">Set</div>
<div class="t" style="left:359.5px;top:553px;font-size:11px;letter-spacing:-0.02px;color:#0000ff;">2.004</div>
<div class="t" style="left:396.5px;top:553px;font-size:11px;letter-spacing:-0.23px;color:#0000ff;">m-pvi 001</div>
<div class="t" style="right:778.50px;top:553px;font-size:11px;color:#0000ff;">75</div>
<div class="t" style="left:512.5px;top:553px;font-size:11px;letter-spacing:0.69px;color:#0000ff;">m²</div>
<div class="t" style="left:537px;top:553px;font-size:11px;letter-spacing:-0.06px;color:#0000ff;">leichte Verunreinigungen von Staub, vereinzelten Putzspritzern und dgl. entfernen</div>
<div class="t" style="right:117.00px;top:553px;font-size:11px;color:#0000ff;">1,46 €</div>
<div class="t" style="right:38.00px;top:553px;font-size:11px;color:#0000ff;">109,50 €</div>
<div class="a" style="left:256px;top:588px;width:5px;height:1px;background:#a0a0a0;"></div>
<div class="box" style="left:261px;top:583px;width:11px;height:11px;border:1px solid #a0a0a0;background:linear-gradient(#fff,#ececec);"></div>
<div class="a" style="left:263px;top:588px;width:7px;height:1px;background:#b2b2c0;"></div>
<div class="a" style="left:266px;top:585px;width:1px;height:7px;background:#b2b2c0;"></div>
<div class="t" style="left:289px;top:584px;font-size:11px;letter-spacing:-0.27px;color:#0000ff;">Set</div>
<div class="t" style="left:359.5px;top:584px;font-size:11px;letter-spacing:-0.02px;color:#0000ff;">2.005</div>
<div class="t" style="left:396.5px;top:584px;font-size:11px;letter-spacing:-0.19px;color:#0000ff;">m-pi 021</div>
<div class="t" style="right:778.50px;top:584px;font-size:11px;color:#0000ff;">75</div>
<div class="t" style="left:512.5px;top:584px;font-size:11px;letter-spacing:0.69px;color:#0000ff;">m²</div>
<div class="t" style="left:537px;top:584px;font-size:11px;letter-spacing:-0.12px;color:#0000ff;">Latexfarbe nach DIN EN 13300 Klasse 2, matt, einmaliger Anstrich auf bereits gestrichenen Flächen weiß oder hell</div>
<div class="t" style="left:537px;top:597px;font-size:11px;letter-spacing:0.07px;color:#0000ff;">getönt</div>
<div class="t" style="right:117.00px;top:584px;font-size:11px;color:#0000ff;">3,92 €</div>
<div class="t" style="right:38.00px;top:584px;font-size:11px;color:#0000ff;">294,00 €</div>
<div class="a" style="left:256px;top:619px;width:5px;height:1px;background:#a0a0a0;"></div>
<div class="box" style="left:261px;top:614px;width:11px;height:11px;border:1px solid #a0a0a0;background:linear-gradient(#fff,#ececec);"></div>
<div class="a" style="left:263px;top:619px;width:7px;height:1px;background:#b2b2c0;"></div>
<div class="a" style="left:266px;top:616px;width:1px;height:7px;background:#b2b2c0;"></div>
<div class="t" style="left:289px;top:615px;font-size:11px;letter-spacing:-0.27px;color:#0000ff;">Set</div>
<div class="t" style="left:359.5px;top:615px;font-size:11px;letter-spacing:-0.02px;color:#0000ff;">2.006</div>
<div class="t" style="left:396.5px;top:615px;font-size:11px;letter-spacing:0.1px;color:#0000ff;">e-st 001</div>
<div class="t" style="right:778.50px;top:615px;font-size:11px;color:#0000ff;">3</div>
<div class="t" style="left:508px;top:615px;font-size:11px;letter-spacing:-0.14px;color:#0000ff;">Stck</div>
<div class="t" style="left:537px;top:615px;font-size:11px;letter-spacing:-0.07px;color:#0000ff;">Aus/Wechselschalter u. P. Standard liefern und montieren</div>
<div class="t" style="right:117.00px;top:615px;font-size:11px;color:#0000ff;">6,08 €</div>
<div class="t" style="right:38.00px;top:615px;font-size:11px;color:#0000ff;">18,24 €</div>
<div class="a" style="left:256px;top:650px;width:5px;height:1px;background:#a0a0a0;"></div>
<div class="box" style="left:261px;top:645px;width:11px;height:11px;border:1px solid #a0a0a0;background:linear-gradient(#fff,#ececec);"></div>
<div class="a" style="left:263px;top:650px;width:7px;height:1px;background:#b2b2c0;"></div>
<div class="a" style="left:266px;top:647px;width:1px;height:7px;background:#b2b2c0;"></div>
<div class="t" style="left:289px;top:646px;font-size:11px;letter-spacing:-0.27px;color:#0000ff;">Set</div>
<div class="t" style="left:359.5px;top:646px;font-size:11px;letter-spacing:-0.02px;color:#0000ff;">2.007</div>
<div class="t" style="left:396.5px;top:646px;font-size:11px;letter-spacing:0.22px;color:#0000ff;">e-st 011</div>
<div class="t" style="right:778.50px;top:646px;font-size:11px;color:#0000ff;">3</div>
<div class="t" style="left:508px;top:646px;font-size:11px;letter-spacing:-0.14px;color:#0000ff;">Stck</div>
<div class="t" style="left:537px;top:646px;font-size:11px;letter-spacing:-0.14px;color:#0000ff;">Schalterabdeckung Standard liefern und montieren</div>
<div class="t" style="right:117.00px;top:646px;font-size:11px;color:#0000ff;">1,56 €</div>
<div class="t" style="right:38.00px;top:646px;font-size:11px;color:#0000ff;">4,68 €</div>
<div class="a" style="left:256px;top:681px;width:5px;height:1px;background:#a0a0a0;"></div>
<div class="box" style="left:261px;top:676px;width:11px;height:11px;border:1px solid #a0a0a0;background:linear-gradient(#fff,#ececec);"></div>
<div class="a" style="left:263px;top:681px;width:7px;height:1px;background:#b2b2c0;"></div>
<div class="a" style="left:266px;top:678px;width:1px;height:7px;background:#b2b2c0;"></div>
<div class="t" style="left:289px;top:677px;font-size:11px;letter-spacing:-0.27px;color:#0000ff;">Set</div>
<div class="t" style="left:359.5px;top:677px;font-size:11px;letter-spacing:-0.02px;color:#0000ff;">2.008</div>
<div class="t" style="left:396.5px;top:677px;font-size:11px;color:#0000ff;">e-an 033</div>
<div class="t" style="right:778.50px;top:677px;font-size:11px;color:#0000ff;">8</div>
<div class="t" style="left:508px;top:677px;font-size:11px;letter-spacing:-0.14px;color:#0000ff;">Stck</div>
<div class="t" style="left:537px;top:677px;font-size:11px;letter-spacing:-0.11px;color:#0000ff;">Antennensteckdose Gedu 2411 liefern und montieren</div>
<div class="t" style="right:117.00px;top:677px;font-size:11px;color:#0000ff;">21,91 €</div>
<div class="t" style="right:38.00px;top:677px;font-size:11px;color:#0000ff;">175,28 €</div>
<div class="t b" style="left:230px;top:705px;font-size:11px;letter-spacing:-0.28px;">Zahlungsart *</div>
<div class="box" style="left:230px;top:717px;width:649px;height:16px;border:1px solid #000;background:#f4f4f4;"></div>
<div class="t" style="left:232.5px;top:720px;font-size:9.5px;letter-spacing:-0.23px;">Einzeleinzug per SEPA-Lastschrift</div>
<div class="a" style="left:862px;top:718px;width:1px;height:14px;background:#000;"></div>
<svg class="a" style="left:867px;top:722px" width="7" height="7" viewBox="0 0 7 7"><path d="M0.3 1L6.3 6.5M6.3 1L0.3 6.5" stroke="#ff5a4a" stroke-width="1.3"/></svg>
<div class="t b" style="left:883.5px;top:705px;font-size:11px;letter-spacing:-0.4px;">GP Summe</div>
<div class="box" style="left:883px;top:717px;width:69px;height:16px;border:1px solid #000;background:#fff;"></div>
<div class="t" style="left:886px;top:720px;font-size:9.5px;letter-spacing:-0.15px;">2.313,80 €</div>
<div class="t b" style="left:951.5px;top:705px;font-size:11px;letter-spacing:-0.4px;">Rabattfähig</div>
<div class="box" style="left:951px;top:717px;width:69px;height:16px;border:1px solid #000;background:#f4f4f4;"></div>
<div class="t" style="left:954px;top:720px;font-size:9.5px;letter-spacing:-0.15px;">2.313,80 €</div>
<div class="t b" style="left:1019.5px;top:705px;font-size:11px;letter-spacing:0.82px;">± % *</div>
<div class="box" style="left:1019px;top:717px;width:41px;height:16px;border:1px solid #000;background:#fff;"></div>
<div class="t b" style="left:1059.5px;top:705px;font-size:11px;letter-spacing:-0.4px;">Netto</div>
<div class="box" style="left:1059px;top:717px;width:69px;height:16px;border:1px solid #000;background:#f4f4f4;"></div>
<div class="t" style="left:1062px;top:720px;font-size:9.5px;letter-spacing:-0.15px;">2.313,80 €</div>
<div class="t b" style="left:1127.5px;top:705px;font-size:11px;letter-spacing:-0.4px;">USt.</div>
<div class="box" style="left:1127px;top:717px;width:69px;height:16px;border:1px solid #000;background:#f4f4f4;"></div>
<div class="t" style="left:1130px;top:720px;font-size:9.5px;letter-spacing:-0.14px;">439,62 €</div>
<div class="t b" style="left:1195.5px;top:705px;font-size:11px;letter-spacing:-0.29px;">Brutto</div>
<div class="box" style="left:1195px;top:717px;width:68px;height:16px;border:1px solid #000;background:#fff;"></div>
<div class="t" style="left:1198px;top:720px;font-size:9.5px;letter-spacing:-0.15px;">2.753,42 €</div>
</body></html>
